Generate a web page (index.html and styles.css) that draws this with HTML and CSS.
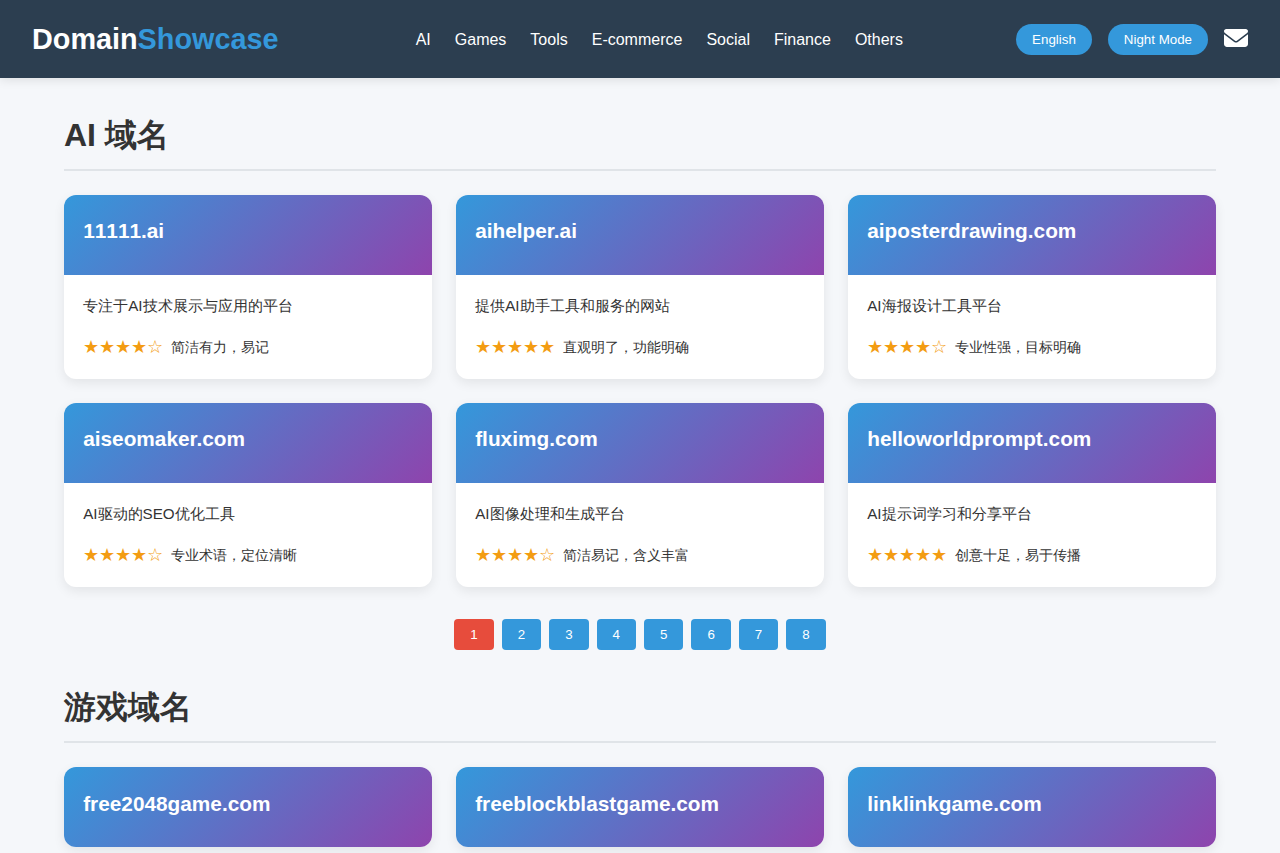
FILE: index.html
```html
<!DOCTYPE html>
<html>
<head>
<meta charset="utf-8">
<title>DomainShowcase</title>
<link rel="stylesheet" href="styles.css">
</head>
<body>
<header class="site-header">
  <div class="logo">Domain<span class="logo-accent">Showcase</span></div>
  <nav class="nav">
    <a href="#">AI</a><a href="#">Games</a><a href="#">Tools</a><a href="#">E-commerce</a><a href="#">Social</a><a href="#">Finance</a><a href="#">Others</a>
  </nav>
  <div class="actions">
    <button class="pill">English</button>
    <button class="pill">Night Mode</button>
    <a class="mail" href="#" aria-label="Contact">
      <svg viewBox="0 0 512 512" width="24" height="24" fill="#fff"><path d="M48 64C21.5 64 0 85.5 0 112c0 15.1 7.1 29.3 19.2 38.4L236.8 313.6c11.4 8.5 27 8.5 38.4 0L492.8 150.4c12.1-9.1 19.2-23.3 19.2-38.4c0-26.5-21.5-48-48-48H48zM0 176V384c0 35.3 28.7 64 64 64H448c35.3 0 64-28.7 64-64V176L294.4 339.2c-22.8 17.1-54 17.1-76.8 0L0 176z"/></svg>
    </a>
  </div>
</header>
<main class="main">
  <section class="section">
    <h2 class="section-title">AI 域名</h2>
    <div class="grid">
      <article class="card"><div class="card-head no-kern">11111.ai</div><div class="card-body"><p class="desc">专注于AI技术展示与应用的平台</p><div class="rating"><span class="stars">★★★★☆</span><span class="note">简洁有力，易记</span></div></div></article>
      <article class="card"><div class="card-head">aihelper.ai</div><div class="card-body"><p class="desc">提供AI助手工具和服务的网站</p><div class="rating"><span class="stars">★★★★★</span><span class="note">直观明了，功能明确</span></div></div></article>
      <article class="card"><div class="card-head">aiposterdrawing.com</div><div class="card-body"><p class="desc">AI海报设计工具平台</p><div class="rating"><span class="stars">★★★★☆</span><span class="note">专业性强，目标明确</span></div></div></article>
      <article class="card"><div class="card-head">aiseomaker.com</div><div class="card-body"><p class="desc">AI驱动的SEO优化工具</p><div class="rating"><span class="stars">★★★★☆</span><span class="note">专业术语，定位清晰</span></div></div></article>
      <article class="card"><div class="card-head">fluximg.com</div><div class="card-body"><p class="desc">AI图像处理和生成平台</p><div class="rating"><span class="stars">★★★★☆</span><span class="note">简洁易记，含义丰富</span></div></div></article>
      <article class="card"><div class="card-head">helloworldprompt.com</div><div class="card-body"><p class="desc">AI提示词学习和分享平台</p><div class="rating"><span class="stars">★★★★★</span><span class="note">创意十足，易于传播</span></div></div></article>
    </div>
    <div class="pagination">
      <button class="page active">1</button>
      <button class="page">2</button>
      <button class="page">3</button>
      <button class="page">4</button>
      <button class="page">5</button>
      <button class="page">6</button>
      <button class="page">7</button>
      <button class="page">8</button>
    </div>
  </section>
  <section class="section">
    <h2 class="section-title">游戏域名</h2>
    <div class="grid">
      <article class="card"><div class="card-head">free2048game.com</div></article>
      <article class="card"><div class="card-head">freeblockblastgame.com</div></article>
      <article class="card"><div class="card-head">linklinkgame.com</div></article>
    </div>
  </section>
</main>
</body>
</html>
```
FILE: styles.css
```css
* { box-sizing: border-box; margin: 0; padding: 0; }
html { height: 853px; overflow: hidden; }
body {
  height: 853px;
  overflow: hidden;
  background: #f5f7fa;
  color: #333;
  font-family: "Liberation Sans", sans-serif;
  font-size: 16px;
  line-height: 1.6;
}
.site-header {
  display: flex;
  justify-content: space-between;
  align-items: center;
  padding: 16px 32px;
  background: #2c3e50;
  box-shadow: 0 2px 10px rgba(0, 0, 0, .1);
  position: relative;
}
.logo { font-size: 28.8px; font-weight: 700; color: #fff; }
.logo-accent { color: #3498db; }
.nav { display: flex; }
.nav a { margin-left: 24px; padding-top: 2px; color: #fff; text-decoration: none; font-size: 16px; }
.actions { display: flex; align-items: center; gap: 16px; }
.pill {
  padding: 8px 16px;
  border: 0;
  border-radius: 20px;
  background: #3498db;
  color: #fff;
  font-family: inherit;
  font-size: 13.333px;
  line-height: 15px;
}
.mail { display: flex; padding-bottom: 2px; }
.main { padding: 32px 64px; }
.section { margin-bottom: 32px; }
.section-title {
  margin-bottom: 24px;
  padding-bottom: 8px;
  border-bottom: 2px solid #e0e4e8;
  font-size: 32px;
  font-weight: 700;
  color: #333;
}
.grid { display: grid; grid-template-columns: repeat(3, 1fr); gap: 24px; }
.card {
  overflow: hidden;
  border-radius: 12px;
  background: #fff;
  box-shadow: 0 4px 12px rgba(0, 0, 0, .08);
}
.card-head {
  height: 80px;
  padding: 19.2px;
  background: linear-gradient(135deg, #3498db, #8e44ad);
  color: #fff;
  font-size: 20.8px;
  font-weight: 700;
}
.no-kern { font-kerning: none; }
.card-body { padding: 19.2px; }
.desc { margin-bottom: 16px; font-size: 15.2px; line-height: 24px; color: #333; }
.rating { display: flex; align-items: center; gap: 8px; height: 25.6px; }
.stars { padding-top: 1px; color: #f39c12; font-size: 18px; line-height: 25.6px; }
.note { font-size: 14px; color: #333; }
.pagination { display: flex; justify-content: center; gap: 8px; margin-top: 32px; }
.page {
  padding: 8px 16px;
  border: 0;
  border-radius: 4px;
  background: #3498db;
  color: #fff;
  font-family: inherit;
  font-size: 13.333px;
  line-height: 15px;
}
.page.active { background: #e74c3c; }
```
